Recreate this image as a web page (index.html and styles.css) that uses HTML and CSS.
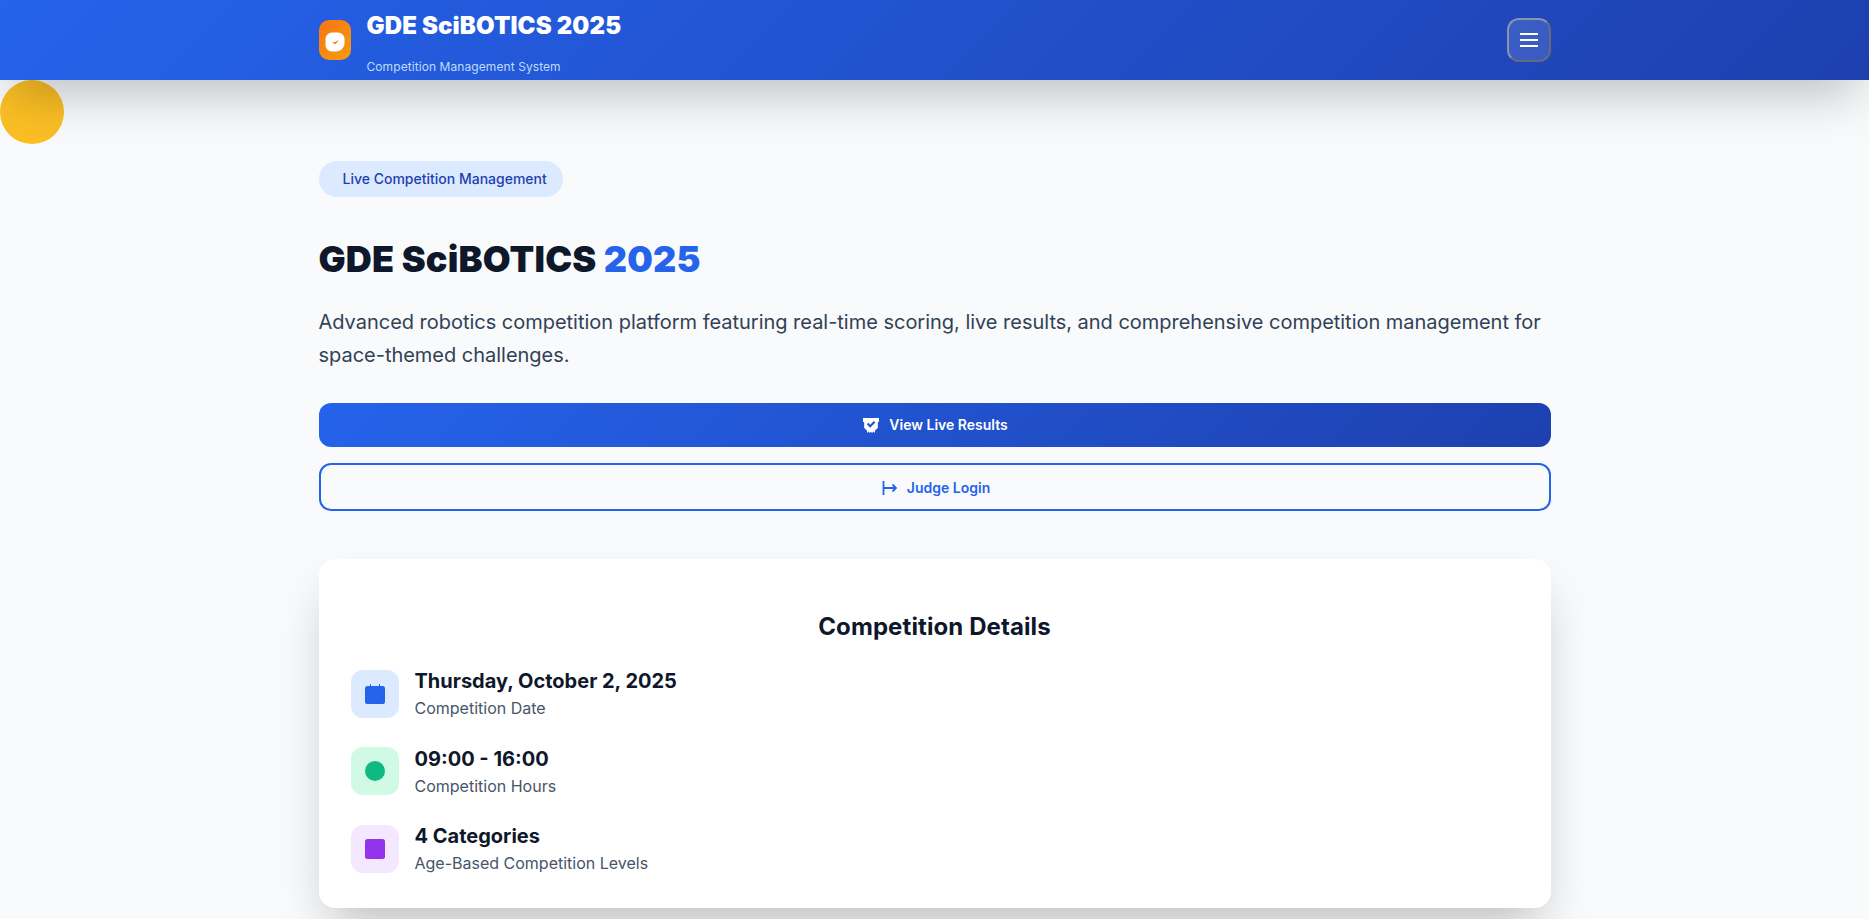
FILE: index.html
```html
<!DOCTYPE html>
<html lang="en">
  <head>
    <meta charset="UTF-8" />
    <meta name="viewport" content="width=device-width, initial-scale=1.0" />
    <title>GDE SciBOTICS 2025</title>
    <link rel="stylesheet" href="styles.css">
  </head>
  <body>
    <header class="site-header">
      <div class="container header-row">
        <div class="brand">
          <div class="brand-logo">
            <svg class="logo-mark" width="20" height="20" viewBox="0 0 20 20">
              <path d="M7 .5h6c3.500 0 6.500 3 6.500 6.500v4c0 4.500-4 8.500-8.500 8.500H7c-3.500 0-6.500-3-6.500-6.500V7C.5 3.500 3.500.5 7 .5z" fill="#fff"/>
              <path d="M7 9.800l3 .4 3.800-2.400-2.600 3.600-1.600.6z" fill="#f97316"/>
            </svg>
          </div>
          <div class="brand-text">
            <div class="brand-title">GDE SciBOTICS 2025</div>
            <div class="brand-sub">Competition Management System</div>
          </div>
        </div>
        <button class="menu-btn" aria-label="Menu">
          <svg width="18" height="14" viewBox="0 0 18 14">
            <path d="M0 1h18M0 7h18M0 13h18" stroke="#fff" stroke-width="2"/>
          </svg>
        </button>
      </div>
    </header>

    <div class="float-dot"></div>

    <main class="container hero">
      <div class="badge">Live Competition Management</div>
      <h1 class="hero-title">GDE SciBOTICS <span class="accent">2025</span></h1>
      <p class="hero-text">
        Advanced robotics competition platform featuring real-time scoring, live results, and comprehensive competition management for space-themed challenges.
      </p>

      <a class="btn btn-primary" href="#">
        <svg width="16" height="16" viewBox="0 0 16 16">
          <path d="M0 0h16v3.500l-1.200 1V10L12 12.500v2.500l-1.500-1.500L9 15l-1-1.500L7 15l-1.500-1.500L4 15v-2.500L1.200 10V4.500L0 3.500z" fill="#fff"/>
          <path d="M4.600 5.500l2.600 2.800 4.400-4.600" fill="none" stroke="#2050c8" stroke-width="2"/>
        </svg>
        View Live Results
      </a>
      <a class="btn btn-outline" href="#">
        <svg width="16" height="16" viewBox="0 0 16 16">
          <path d="M2.500 1v14M2.500 8H15M11.500 4.500L15 8l-3.500 3.500" fill="none" stroke="#2563eb" stroke-width="1.800"/>
        </svg>
        Judge Login
      </a>

      <section class="card">
        <h2 class="card-title">Competition Details</h2>
        <div class="detail-list">
          <div class="detail">
            <div class="detail-icon icon-blue">
              <svg width="20" height="20" viewBox="0 0 20 20">
                <path d="M5 0h1v2h8V0h1v2h2.500A2.500 2.500 0 0 1 20 4.500V18a2 2 0 0 1-2 2H2a2 2 0 0 1-2-2V4.500A2.500 2.500 0 0 1 2.500 2H5z" fill="#2563eb"/>
              </svg>
            </div>
            <div>
              <div class="detail-head">Thursday, October 2, 2025</div>
              <div class="detail-sub">Competition Date</div>
            </div>
          </div>
          <div class="detail">
            <div class="detail-icon icon-green">
              <svg width="20" height="20" viewBox="0 0 20 20">
                <circle cx="10" cy="10" r="10" fill="#10b981"/>
              </svg>
            </div>
            <div>
              <div class="detail-head">09:00 - 16:00</div>
              <div class="detail-sub">Competition Hours</div>
            </div>
          </div>
          <div class="detail">
            <div class="detail-icon icon-purple">
              <svg width="20" height="20" viewBox="0 0 20 20">
                <rect width="20" height="20" rx="2.500" fill="#9333ea"/>
              </svg>
            </div>
            <div>
              <div class="detail-head">4 Categories</div>
              <div class="detail-sub">Age-Based Competition Levels</div>
            </div>
          </div>
        </div>
      </section>
    </main>
  </body>
</html>
```

FILE: styles.css
```css
* {
  box-sizing: border-box;
}

body {
  margin: 0;
  font-family: "Inter", "Liberation Sans", sans-serif;
  line-height: 1.6;
  background-color: #f8fafc;
  color: #0f172a;
  position: relative;
}

.container {
  width: 100%;
  max-width: 1280px;
  margin: 0 auto;
  padding: 0 24px;
}

/* header */
.site-header {
  position: relative;
  z-index: 10;
  height: 80px;
  background: linear-gradient(135deg, #2563eb, #1e40af);
  box-shadow: 0 25px 50px -12px rgba(0, 0, 0, 0.25);
}

.header-row {
  height: 100%;
  display: flex;
  justify-content: space-between;
  align-items: center;
}

.brand {
  display: flex;
  align-items: center;
  gap: 16px;
  height: 100%;
}

.brand-logo {
  width: 32px;
  height: 40px;
  border-radius: 10px;
  background: linear-gradient(135deg, #f97316, #f59e0b);
  display: flex;
  justify-content: center;
  align-items: center;
}

.logo-mark {
  margin-top: 4px;
}

.brand-text {
  align-self: flex-start;
  padding-top: 7px;
}

.brand-title {
  font-size: 24px;
  font-weight: 900;
  letter-spacing: 0.005em;
  color: #fff;
  margin-bottom: 12px;
}

.brand-sub {
  font-size: 12px;
  letter-spacing: 0.08px;
  color: #bfdbfe;
}

.menu-btn {
  width: 44px;
  height: 44px;
  padding: 0;
  border: 2px solid;
  border-color: #8c92ad #666a7c #666a7c #8c92ad;
  border-radius: 12px;
  background: rgba(255, 255, 255, 0.12);
  display: flex;
  justify-content: center;
  align-items: center;
}

/* yellow dot under the header */
.float-dot {
  position: absolute;
  top: 80px;
  left: 0;
  width: 64px;
  height: 64px;
  border-radius: 50%;
  background: #fbbf24;
}

/* hero */
.hero {
  padding-top: 81px;
  padding-bottom: 48px;
}

.badge {
  display: inline-block;
  padding: 7px 16px 7px 24px;
  border-radius: 999px;
  background: #dbeafe;
  color: #1e40af;
  font-size: 14px;
  font-weight: 500;
  line-height: 22px;
}

.hero-title {
  margin: 34px 0 17px;
  font-size: 36px;
  font-weight: 900;
  letter-spacing: 0.005em;
  line-height: 1.6;
  color: #0f172a;
}

.accent {
  color: #2563eb;
}

.hero-text {
  margin: 0 0 31px;
  font-size: 20px;
  line-height: 1.65;
  letter-spacing: -0.02px;
  color: #334155;
}

.btn {
  display: flex;
  justify-content: center;
  align-items: center;
  gap: 10px;
  padding-left: 2px;
  border-radius: 12px;
  font-size: 14px;
  font-weight: 600;
  text-decoration: none;
}

.btn-primary {
  height: 44px;
  padding-top: 2px;
  background: linear-gradient(135deg, #2563eb, #1e40af);
  color: #fff;
}

.btn-outline {
  height: 48px;
  margin-top: 16px;
  padding-top: 3px;
  border: 2px solid #2563eb;
  color: #2563eb;
}

/* details card */
.card {
  margin-top: 48px;
  padding: 49px 32px 31px;
  background: #fff;
  border-radius: 16px;
  box-shadow: 0 25px 50px -12px rgba(0, 0, 0, 0.25);
}

.card-title {
  margin: 0 0 20px;
  font-size: 24px;
  font-weight: 700;
  letter-spacing: 0.1px;
  line-height: 1.6;
  text-align: center;
}

.detail-list {
  display: flex;
  flex-direction: column;
  gap: 22px;
}

.detail {
  display: flex;
  align-items: center;
  gap: 16px;
}

.detail-icon {
  width: 48px;
  height: 48px;
  border-radius: 12px;
  display: flex;
  justify-content: center;
  align-items: center;
}

.icon-blue {
  background: #dbeafe;
}

.icon-green {
  background: #d1fae5;
}

.icon-purple {
  background: #f3e8ff;
}

.detail-head {
  font-size: 20px;
  font-weight: 700;
  line-height: 1.5;
}

.detail-sub {
  font-size: 16px;
  color: #475569;
}
```
